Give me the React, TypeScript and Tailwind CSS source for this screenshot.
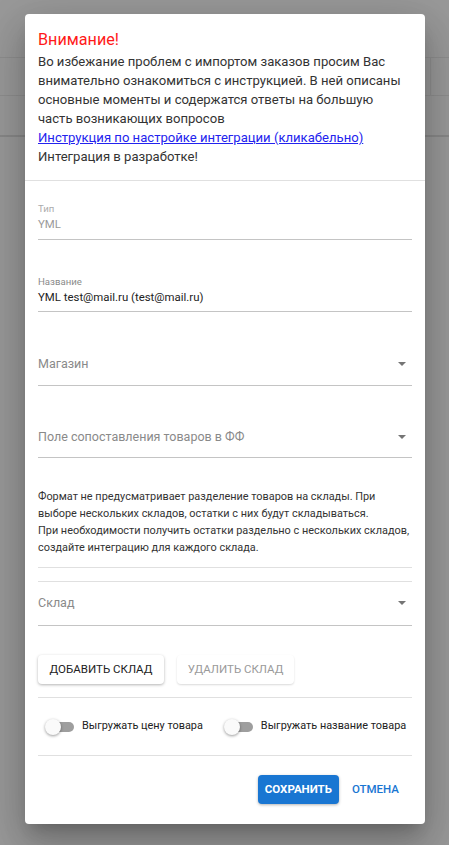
import React from "react";

function Caret() {
  return (
    <svg width="8" height="4" viewBox="0 0 8 4" className="mr-[6px]">
      <path d="M0 0 L8 0 L4 4 Z" fill="#757575" />
    </svg>
  );
}

function Switch() {
  return (
    <div className="relative w-[30px] h-[16px] shrink-0">
      <div className="absolute left-[4px] top-[3px] w-[25px] h-[10px] rounded-full bg-[#9e9e9e]" />
      <div className="absolute left-0 top-0 w-[16px] h-[16px] rounded-full bg-[#fafafa] shadow-[0_1px_3px_rgba(0,0,0,0.4)]" />
    </div>
  );
}

export default function App() {
  return (
    <div className="relative w-[449px] h-[845px] overflow-hidden bg-[#999999] font-['Roboto',sans-serif]">
      {/* underlying page lines */}
      <div className="absolute inset-0">
        <div className="absolute left-0 right-0 top-[57px] h-px bg-[#8e8e8e]" />
        <div className="absolute left-0 right-0 top-[95px] h-px bg-[#8e8e8e]" />
        <div className="absolute left-0 right-0 top-[135px] h-[2px] bg-[#888888]" />
        <div className="absolute left-[430px] top-[57px] h-[39px] w-px bg-[#8e8e8e]" />
      </div>

      {/* modal */}
      <div className="absolute left-[25px] top-[14px] w-[400px] h-[810px] bg-white rounded-[4px] shadow-[0_11px_15px_-7px_rgba(0,0,0,0.2),0_24px_38px_3px_rgba(0,0,0,0.14),0_9px_46px_8px_rgba(0,0,0,0.12)] flex flex-col">
        {/* header */}
        <div className="px-[13px] pt-[16px] pb-[14px] border-b border-[#e0e0e0]">
          <div className="text-[16.2px] leading-[20px] text-[#ff1a1a]">Внимание!</div>
          <div className="mt-[2px] text-[13.1px] leading-[19px] text-[#333333] whitespace-nowrap">
            <div>Во избежание проблем с импортом заказов просим Вас</div>
            <div>внимательно ознакомиться с инструкцией. В ней описаны</div>
            <div>основные моменты и содержатся ответы на большую</div>
            <div>часть возникающих вопросов</div>
            <div>
              <a href="#" className="text-[#2323ee] underline">Инструкция по настройке интеграции (кликабельно)</a>
            </div>
            <div>Интеграция в разработке!</div>
          </div>
        </div>

        {/* body */}
        <div className="px-[13px] flex flex-col">
          {/* Тип */}
          <div className="mt-[22px] border-b border-[#c4c4c4] pb-[7px]">
            <div className="text-[9.6px] leading-[12px] text-[#ababab]">Тип</div>
            <div className="mt-[1px] text-[11.4px] leading-[16px] text-[#9a9a9a]">YML</div>
          </div>

          {/* Название */}
          <div className="mt-[36px] border-b border-[#c4c4c4] pb-[6px]">
            <div className="text-[9.6px] leading-[12px] text-[#8a8a8a]">Название</div>
            <div className="mt-[1px] text-[11.4px] leading-[16px] text-[#222222]">YML test@mail.ru (test@mail.ru)</div>
          </div>

          {/* Магазин */}
          <div className="mt-[42px] border-b border-[#c4c4c4] pb-[11px] flex items-center justify-between">
            <div className="text-[12.5px] leading-[20px] text-[#8a8a8a]">Магазин</div>
            <Caret />
          </div>

          {/* Поле */}
          <div className="mt-[41px] border-b border-[#c4c4c4] pb-[10px] flex items-center justify-between">
            <div className="text-[12.5px] leading-[20px] text-[#8a8a8a]">Поле сопоставления товаров в ФФ</div>
            <Caret />
          </div>

          <div className="mt-[30px] text-[10.9px] leading-[17px] text-[#333333] whitespace-nowrap">
            <div>Формат не предусматривает разделение товаров на склады. При</div>
            <div>выборе нескольких складов, остатки с них будут складываться.</div>
            <div>При необходимости получить остатки раздельно с нескольких складов,</div>
            <div>создайте интеграцию для каждого склада.</div>
          </div>

          <div className="mt-[11px] h-px bg-[#e0e0e0]" />
          <div className="mt-[13px] h-px bg-[#e0e0e0]" />

          {/* Склад */}
          <div className="mt-[11px] border-b border-[#c4c4c4] pb-[12px] flex items-center justify-between">
            <div className="text-[12.5px] leading-[20px] text-[#8a8a8a]">Склад</div>
            <Caret />
          </div>

          {/* buttons */}
          <div className="mt-[29px] flex gap-[13px]">
            <button className="h-[29px] w-[126px] rounded-[4px] bg-white shadow-[0_1px_3px_rgba(0,0,0,0.3)] text-[11.5px] text-[#222222] uppercase">
              Добавить склад
            </button>
            <button className="h-[29px] w-[117px] rounded-[4px] bg-white shadow-[0_1px_2px_rgba(0,0,0,0.15)] text-[11.5px] text-[#9a9a9a] uppercase">
              Удалить склад
            </button>
          </div>

          <div className="mt-[13px] h-px bg-[#e0e0e0]" />

          {/* switches */}
          <div className="h-[57px] flex items-center pl-[7px] whitespace-nowrap">
            <Switch />
            <span className="ml-[7px] text-[10.9px] text-[#222222]">Выгружать цену товара</span>
            <div className="ml-[21px]">
              <Switch />
            </div>
            <span className="ml-[7px] text-[10.9px] text-[#222222]">Выгружать название товара</span>
          </div>

          <div className="h-px bg-[#e0e0e0]" />

          {/* actions */}
          <div className="mt-[19px] flex justify-end items-center pr-[13px]">
            <button className="h-[29px] w-[81px] rounded-[4px] bg-[#1976d2] text-white font-bold text-[11.5px] uppercase shadow-[0_1px_3px_rgba(0,0,0,0.3)]">
              Сохранить
            </button>
            <button className="ml-[13px] h-[29px] text-[#1976d2] font-medium text-[11.5px] uppercase">
              Отмена
            </button>
          </div>
        </div>
      </div>
    </div>
  );
}
